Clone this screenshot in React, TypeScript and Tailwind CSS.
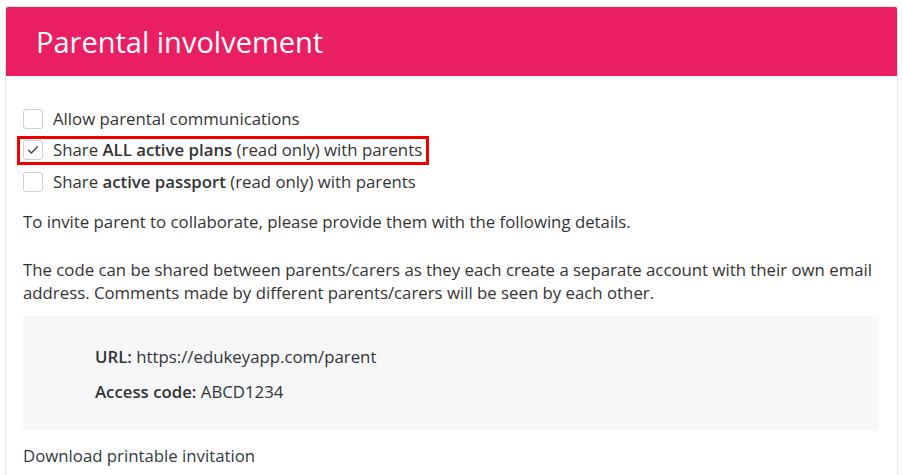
import React from "react";

function Box({ checked = false }: { checked?: boolean }) {
  return (
    <span className="flex h-[20px] w-[20px] shrink-0 items-center justify-center rounded-[3px] border border-[#cfcfcf] bg-white">
      {checked && (
        <svg width="12" height="10" viewBox="0 0 12 10" fill="none">
          <path d="M1.5 5.2 4.4 8 10.5 1.8" stroke="#444" strokeWidth="1.4" strokeLinecap="round" strokeLinejoin="round" />
        </svg>
      )}
    </span>
  );
}

function Row({ checked, children, marked }: { checked?: boolean; children: React.ReactNode; marked?: boolean }) {
  return (
    <div className="relative flex h-[31.5px] items-center gap-[10px]">
      {marked && (
        <div className="pointer-events-none absolute left-[-6px] top-[1px] h-[29px] w-[412px] border-[3px] border-[#ee0000]" />
      )}
      <Box checked={checked} />
      <span>{children}</span>
    </div>
  );
}

export default function App() {
  return (
    <div
      className="min-h-[475px] bg-white pl-[5px] pr-[5px] pt-[6px] text-[16.8px] text-[#333]"
      style={{ fontFamily: '"Open Sans", "Liberation Sans", sans-serif' }}
    >
      <div className="h-[469px] w-[893px] overflow-hidden rounded-t-[3px] border border-b-0 border-[#e6e6e6] bg-white">
        <div className="flex h-[69px] items-center bg-[#e91e63] pl-[30px] text-[29px] text-white">
          Parental involvement
        </div>

        <div className="pl-[17px] pr-[18px] pt-[27px] leading-[24px]">
          <Row>Allow parental communications</Row>
          <Row checked marked>
            Share <b className="font-semibold">ALL active plans</b> (read only) with parents
          </Row>
          <Row>
            Share <b className="font-semibold">active passport</b> (read only) with parents
          </Row>

          <p className="mt-[12px]">To invite parent to collaborate, please provide them with the following details.</p>

          <p className="mt-[24px] leading-[23px]">
            The code can be shared between parents/carers as they each create a separate account with their own email
            address. Comments made by different parents/carers will be seen by each other.
          </p>

          <div className="mt-[12px] h-[115px] rounded-[3px] bg-[#f5f7f9] pl-[72px] pt-[29px]">
            <p>
              <b className="font-semibold">URL:</b> https://edukeyapp.com/parent
            </p>
            <p className="mt-[11px]">
              <b className="font-semibold">Access code:</b> ABCD1234
            </p>
          </div>

          <p className="mt-[13px] text-[#2f3b40]">Download printable invitation</p>
        </div>
      </div>
    </div>
  );
}
